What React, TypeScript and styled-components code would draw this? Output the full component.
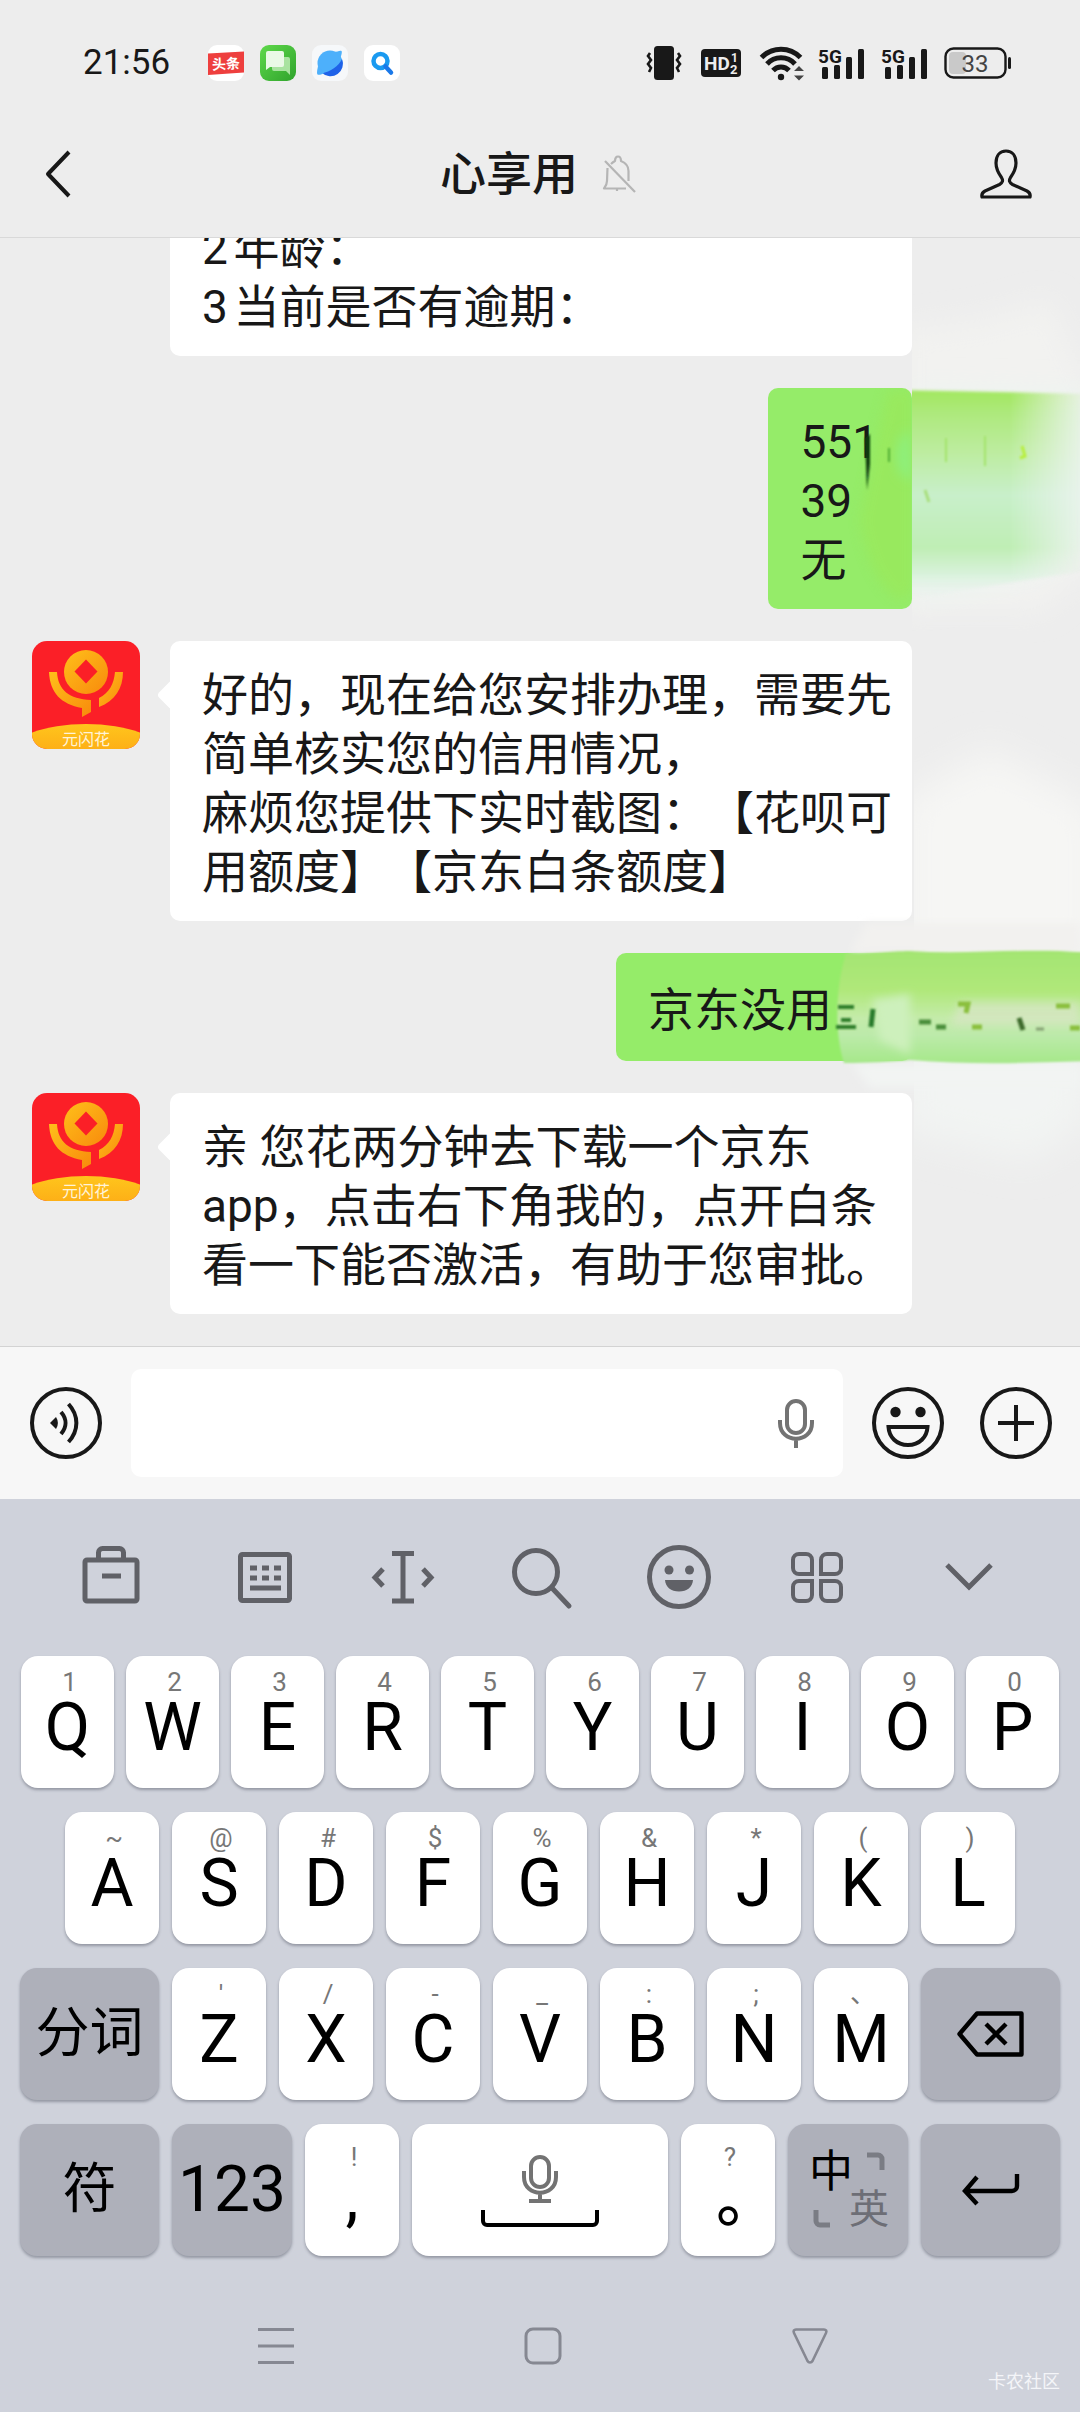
import React from 'react';
import styled, { createGlobalStyle } from 'styled-components';

const sans = `Roboto, "Noto Sans CJK SC", sans-serif`;

const GlobalStyle = createGlobalStyle`
  * { box-sizing: border-box; }
  body { margin: 0; background: #ededed; }
  button, input { font: inherit; color: inherit; border: 0; margin: 0; padding: 0; background: none; }
  svg { display: block; flex: none; overflow: visible; }
`;

const Screen = styled.div`
  display: flex;
  flex-direction: column;
  height: 100vh;
  overflow: hidden;
  position: relative;
  font-family: ${sans};
  color: #181818;
  background: #ededed;
`;

/* ---------- header ---------- */

const StatusBar = styled.div`
  display: flex;
  align-items: center;
  justify-content: space-between;
  height: 126px;
  flex: none;
  padding: 0 69px 0 83px;
`;

const StatusGroup = styled.div<{ $gap: number }>`
  display: flex;
  align-items: center;
  gap: ${(p) => p.$gap}px;
`;

const Clock = styled.time`
  font-size: 35px;
  line-height: 36px;
  margin-right: 22px;
`;

const NavBar = styled.header`
  display: grid;
  grid-template-columns: 1fr auto 1fr;
  align-items: center;
  flex: none;
  height: 112px;
  padding: 0 48px 15px 44px;
  border-bottom: 1px solid #d9d9d9;
`;

const IconButton = styled.button<{ $end?: boolean }>`
  display: flex;
  align-items: center;
  justify-content: center;
  justify-self: ${(p) => (p.$end ? 'end' : 'start')};
`;

const TitleGroup = styled.div`
  display: flex;
  align-items: center;
  gap: 24px;
`;

const Title = styled.h1`
  margin: 0;
  font-size: 46px;
  line-height: 60px;
  font-weight: 500;
`;

/* ---------- chat ---------- */

const Chat = styled.main`
  flex: 1;
  min-height: 0;
  overflow: hidden;
  display: flex;
  flex-direction: column;
  justify-content: flex-end;
  gap: 32px;
  padding-bottom: 32px;
`;

const Row = styled.div<{ $mine?: boolean }>`
  position: relative;
  display: flex;
  flex: none;
  align-items: flex-start;
  justify-content: ${(p) => (p.$mine ? 'flex-end' : 'flex-start')};
  gap: 30px;
  padding: 0 168px 0 32px;
`;

const AvatarSlot = styled.div`
  width: 108px;
  flex: none;
`;

const Bubble = styled.div<{ $mine?: boolean; $wide?: boolean }>`
  position: relative;
  flex: ${(p) => (p.$mine ? 'none' : '1')};
  min-width: ${(p) => (p.$wide ? '296px' : '0')};
  min-height: 108px;
  display: flex;
  align-items: center;
  padding: 25px ${(p) => (p.$mine ? 34 : 18)}px 19px 32px;
  border-radius: 10px;
  background: ${(p) => (p.$mine ? '#95ec69' : '#ffffff')};
`;

const Tail = styled.span`
  position: absolute;
  left: -9px;
  top: 43px;
  width: 22px;
  height: 22px;
  border-radius: 4px;
  background: #ffffff;
  transform: rotate(45deg);
`;

const Message = styled.p`
  margin: 0;
  position: relative;
  font-size: 46px;
  line-height: 59px;
  white-space: pre-line;
  text-spacing-trim: space-all;
  text-autospace: normal;
`;

const Smear = styled.svg<{ $top: number }>`
  position: absolute;
  right: 0;
  top: ${(p) => p.$top}px;
  pointer-events: none;
`;

/* ---------- composer ---------- */

const Composer = styled.form`
  display: flex;
  align-items: center;
  flex: none;
  gap: 29px;
  padding: 22px 28px 22px 30px;
  background: #f7f7f7;
  border-top: 1px solid #d3d3d3;
`;

const Field = styled.div`
  display: flex;
  align-items: center;
  flex: 1;
  min-width: 0;
  height: 108px;
  padding: 0 28px;
  border-radius: 10px;
  background: #ffffff;
`;

const TextInput = styled.input`
  flex: 1;
  min-width: 0;
  height: 60px;
  font-size: 46px;
  outline: none;
`;

const ComposerActions = styled.div`
  display: flex;
  gap: 36px;
`;

/* ---------- keyboard ---------- */

const Keyboard = styled.section`
  flex: none;
  background: #cfd2db;
  color: #000000;
`;

const Tools = styled.div`
  display: grid;
  grid-template-columns: 170fr repeat(5, 138fr) 166fr;
  align-items: center;
  justify-items: center;
  height: 157px;
  padding: 0 28px 2px 26px;
`;

const ToolButton = styled.button`
  display: flex;
  color: #606167;
`;

const Rows = styled.div`
  display: flex;
  flex-direction: column;
  gap: 24px;
`;

const KeyRow = styled.div<{ $pad: number; $gap: number }>`
  display: flex;
  gap: ${(p) => p.$gap}px;
  padding: 0 ${(p) => p.$pad}px;
`;

const Key = styled.button<{ $grow?: number; $dark?: boolean }>`
  display: flex;
  flex-direction: column;
  align-items: center;
  justify-content: ${(p) => (p.$dark ? 'center' : 'flex-start')};
  flex: ${(p) => p.$grow ?? 94} 1 0;
  min-width: 0;
  height: 132px;
  padding-top: ${(p) => (p.$dark ? 0 : 10)}px;
  border-radius: 17px;
  background: ${(p) => (p.$dark ? '#aeb0ba' : '#ffffff')};
  box-shadow: 0 2px 3px rgba(60, 64, 80, 0.4);
`;

const Hint = styled.span`
  font-size: 26px;
  line-height: 32px;
  padding-left: 4px;
  color: #777777;
`;

const Letter = styled.span`
  font-size: 66px;
  line-height: 60px;
`;

const PunctuationKey = styled(Key)`
  padding-top: 17px;
`;

const Comma = styled.span`
  font-size: 66px;
  line-height: 48px;
`;

const FullStop = styled.span`
  font-family: "Noto Sans CJK TC", sans-serif;
  font-weight: 500;
  font-size: 62px;
  line-height: 80px;
`;

const SpaceKey = styled(Key)`
  padding-top: 30px;
`;

const KeyLabel = styled.span<{ $size: number }>`
  font-size: ${(p) => p.$size}px;
  line-height: 64px;
`;

const LanguageGrid = styled.span`
  display: grid;
  grid-template-columns: 36px 40px;
  grid-template-rows: 40px 36px;
  padding-left: 6px;
`;

const LanguageCell = styled.span<{ $corner?: 'top' | 'bottom' }>`
  display: flex;
  align-items: ${(p) => (p.$corner === 'top' ? 'flex-start' : p.$corner === 'bottom' ? 'flex-end' : 'center')};
  justify-content: ${(p) => (p.$corner === 'top' ? 'flex-end' : p.$corner === 'bottom' ? 'flex-start' : 'center')};
  padding-right: ${(p) => (p.$corner === 'top' ? 4 : 0)}px;
`;

const LanguageText = styled.span<{ $muted?: boolean }>`
  font-size: ${(p) => (p.$muted ? 40 : 44)}px;
  line-height: 38px;
  color: ${(p) => (p.$muted ? '#6d6e76' : '#000000')};
`;

const SystemNav = styled.nav`
  display: grid;
  grid-template-columns: repeat(3, 1fr);
  align-items: center;
  justify-items: center;
  height: 156px;
  padding: 24px 136px 0 142px;
`;

const SystemButton = styled.button`
  display: flex;
  color: #868892;
`;

const Watermark = styled.span`
  position: absolute;
  right: 20px;
  bottom: 18px;
  font-size: 18px;
  line-height: 24px;
  color: #f4f5f8;
`;

/* ---------- drawings ---------- */

const ToutiaoIcon = () => (
  <svg width="36" height="36" viewBox="0 0 36 36">
    <rect width="36" height="36" rx="9" fill="#fff" />
    <path d="M0 8.500L36 6.500V27.500L0 30z" fill="#ee3f3e" />
    <text x="18" y="24" textAnchor="middle" fontFamily="Noto Sans CJK SC" fontWeight="700" fontSize="14" fill="#fff" transform="rotate(-3 18 18)">头条</text>
  </svg>
);

const MessagesIcon = () => (
  <svg width="36" height="36" viewBox="0 0 36 36">
    <defs>
      <linearGradient id="msg" x1="0" y1="0" x2="1" y2="1">
        <stop offset="0" stopColor="#5fd94b" /><stop offset="1" stopColor="#2fa32c" />
      </linearGradient>
    </defs>
    <rect width="36" height="36" rx="9" fill="url(#msg)" />
    <path d="M14 12h14a2 2 0 0 1 2 2v16l-4-4H14a2 2 0 0 1-2-2V14a2 2 0 0 1 2-2z" fill="#a9e3a0" />
    <path d="M8 6h14a2 2 0 0 1 2 2v12a2 2 0 0 1-2 2H10l-4 3V8a2 2 0 0 1 2-2z" fill="#eaf9e6" />
  </svg>
);

const BrowserIcon = () => (
  <svg width="36" height="36" viewBox="0 0 36 36">
    <rect width="36" height="36" rx="9" fill="#f6f8fa" />
    <circle cx="18" cy="18" r="12.500" fill="#4db0fb" />
    <path d="M30 14a12.500 12.500 0 0 1-20 14C18 27 27 21 30 14z" fill="#1f62e8" />
    <path d="M22 7c3 0 6-2 7.500-1 1 1-.5 5-1 7zM6 21c-.5 3-1.500 7-.5 8.500 1.500 1 5-.5 7-1.500z" fill="#4db0fb" />
  </svg>
);

const SearchAppIcon = () => (
  <svg width="36" height="36" viewBox="0 0 36 36">
    <rect width="36" height="36" rx="9" fill="#fff" />
    <circle cx="16.500" cy="16" r="7" fill="none" stroke="#1a9af0" strokeWidth="4.500" />
    <path d="M21.500 21.500l5.500 6" stroke="#1a78e8" strokeWidth="4.500" strokeLinecap="round" />
  </svg>
);

const VibrateIcon = () => (
  <svg width="36" height="36" viewBox="0 0 36 36">
    <rect x="8" y="1" width="20" height="34" rx="3.500" fill="#181818" />
    <path d="M4 8l-2 3 3 4-3 4 3 4-2 4M32 8l2 3-3 4 3 4-3 4 2 4" fill="none" stroke="#181818" strokeWidth="2.600" />
  </svg>
);

const HdIcon = () => (
  <svg width="40" height="28" viewBox="0 0 40 28">
    <rect width="40" height="28" rx="4" fill="#181818" />
    <g fill="#ededed" fontFamily="Roboto" fontWeight="700">
      <text x="3" y="21" fontSize="19">HD</text>
      <text x="30" y="13" fontSize="12">1</text>
      <text x="29" y="25" fontSize="13">2</text>
    </g>
  </svg>
);

const WifiIcon = () => (
  <svg width="46" height="36" viewBox="0 0 46 36">
    <g fill="none" stroke="#181818" strokeWidth="5">
      <path d="M1.500 12.500a27 27 0 0 1 39 0" />
      <path d="M7 19a19 19 0 0 1 28 0" />
      <path d="M13 25.500a11 11 0 0 1 16 0" />
    </g>
    <circle cx="21" cy="32" r="3.200" fill="#181818" />
    <path d="M34 26l5-5 5 5zM34 30.500h10l-5 5z" fill="#444" />
  </svg>
);

const SignalIcon = () => (
  <svg width="47" height="36" viewBox="0 0 47 36">
    <text x="0" y="18" fontFamily="Roboto" fontWeight="700" fontSize="19" fill="#181818">5G</text>
    <g fill="#181818">
      <rect x="4" y="22" width="6" height="12" rx="1.500" />
      <rect x="16" y="20" width="6" height="14" rx="1.500" />
      <rect x="28" y="12" width="6" height="22" rx="1.500" />
      <rect x="40" y="4" width="6" height="30" rx="1.500" />
    </g>
  </svg>
);

const BatteryIcon = () => (
  <svg width="67" height="32" viewBox="0 0 67 32">
    <rect x="5" y="5" width="17" height="22" rx="4" fill="#c9c9c9" />
    <rect x="1.500" y="1.500" width="60" height="29" rx="8" fill="none" stroke="#181818" strokeWidth="2.400" />
    <rect x="64" y="10" width="3" height="12" rx="1.500" fill="#181818" />
    <text x="31" y="24.500" textAnchor="middle" fontFamily="Roboto" fontSize="24" fill="#444">33</text>
  </svg>
);

const BackIcon = () => (
  <svg width="28" height="48" viewBox="0 0 28 48">
    <path d="M25 2L4 24l21 22" fill="none" stroke="#181818" strokeWidth="4" strokeLinejoin="round" />
  </svg>
);

const MutedBell = () => (
  <svg width="34" height="38" viewBox="0 0 34 38" fill="none" stroke="#b5b5b5" strokeWidth="2.200" strokeLinejoin="round">
    <path d="M9 9c2-2 3-2.500 4-3 0-6 6-6 6 0 5 2 7.500 5 7.500 10v10M5.500 13L5 26c0 3-1 5-3 7.500h22M15 33.500v2.500" />
    <path d="M3 6l30 31" />
  </svg>
);

const PersonIcon = () => (
  <svg width="52" height="50" viewBox="0 0 52 50">
    <path d="M26 2c-6.500 0-10 5-10 12 0 6.500 3 11 5.500 14.500 1.800 3 1.300 5.200-2 7L5 42c-3 1.700-3.500 4-3 6h48c.5-2 0-4.300-3-6l-14.500-6.500c-3.300-1.800-3.800-4-2-7C33 25 36 20.500 36 14c0-7-3.500-12-10-12z" fill="none" stroke="#181818" strokeWidth="3.200" strokeLinejoin="round" />
  </svg>
);

const Avatar = () => (
  <svg width="108" height="108" viewBox="0 0 108 108" role="img" aria-label="元闪花">
    <defs>
      <clipPath id="avatarClip"><rect width="108" height="108" rx="15" /></clipPath>
      <linearGradient id="gold" x1="0" y1="0" x2="1" y2="1">
        <stop offset="0" stopColor="#ffc01a" /><stop offset="1" stopColor="#f88a0c" />
      </linearGradient>
      <linearGradient id="mound" x1="0" y1="0" x2="0" y2="1">
        <stop offset="0" stopColor="#ffc51c" /><stop offset="1" stopColor="#fb9410" />
      </linearGradient>
    </defs>
    <g clipPath="url(#avatarClip)">
      <rect width="108" height="108" fill="#fb1f27" />
      <circle cx="54" cy="31" r="22" fill="url(#gold)" />
      <path d="M54 18.500l11.500 12-11.500 12-11.500-12z" fill="#fb1f27" />
      <path d="M17 31h8c1 18 12 27 34 28v12l-9 5V67C29 63 18 52 17 31z" fill="url(#gold)" />
      <path d="M83 31h8c0 16-8 29-24 35v-9c10-5 15-14 16-26z" fill="url(#gold)" />
      <ellipse cx="54" cy="112" rx="76" ry="29" fill="url(#mound)" />
      <text x="54" y="104" textAnchor="middle" fontFamily="Noto Sans CJK SC" fontSize="16" fill="#fff3d8">元闪花</text>
    </g>
  </svg>
);

const VoiceIcon = () => (
  <svg width="72" height="72" viewBox="0 0 72 72">
    <circle cx="36" cy="36" r="34" fill="none" stroke="#181818" strokeWidth="4" />
    <path d="M20 36l6-6c2.500 4 2.500 8 0 12z" fill="#181818" />
    <path d="M31 25c6 7 6 15 0 22M38.500 17c10.500 11.500 10.500 26.500 0 38" fill="none" stroke="#181818" strokeWidth="4" />
  </svg>
);

const FieldMic = () => (
  <svg width="38" height="50" viewBox="0 0 38 50" fill="none" stroke="#737373" strokeWidth="4">
    <rect x="10" y="3" width="18" height="32" rx="9" />
    <path d="M3 22v3c0 21 32 21 32 0v-3M19 41v9" />
  </svg>
);

const EmojiIcon = () => (
  <svg width="72" height="72" viewBox="0 0 72 72" fill="none" stroke="#181818" strokeWidth="4">
    <circle cx="36" cy="36" r="34" />
    <circle cx="23.500" cy="25" r="5.200" fill="#181818" stroke="none" />
    <circle cx="48.500" cy="25" r="5.200" fill="#181818" stroke="none" />
    <path d="M16.500 40h39c-.5 10-8 18-19.500 18s-19-8-19.500-18z" />
  </svg>
);

const PlusIcon = () => (
  <svg width="72" height="72" viewBox="0 0 72 72" fill="none" stroke="#181818" strokeWidth="4">
    <circle cx="36" cy="36" r="34" />
    <path d="M36 18v36M18 36h36" />
  </svg>
);

const toolIcons: { label: string; art: React.ReactNode }[] = [
  { label: '工具箱', art: <><rect x="6" y="15" width="52" height="41" rx="2" /><path d="M19.500 15V7.500a4 4 0 0 1 4-4h17a4 4 0 0 1 4 4V15M23 31h19" /></> },
  { label: '键盘', art: <><rect x="7.500" y="9.500" width="49" height="46" rx="2" /><path d="M17 23h7m5 0h7m5 0h7M17 33h7m5 0h7m5 0h7M17 43h31" /></> },
  { label: '光标', art: <path d="M32 9v46M21 8.500h22M21 56h22M12 24L4 32.500l8 8.500M52 24l8 8.500-8 8.500" /> },
  { label: '搜索', art: <><circle cx="27" cy="27" r="21.500" /><path d="M43 43l17 18" strokeLinecap="round" /></> },
  { label: '表情', art: <><circle cx="32" cy="32" r="29.500" /><circle cx="22" cy="25" r="4.500" fill="currentColor" stroke="none" /><circle cx="42.500" cy="25" r="4.500" fill="currentColor" stroke="none" /><path d="M18 35h28c-.5 7-6 11.500-14 11.500S18.500 42 18 35z" fill="currentColor" stroke="none" /></> },
  { label: '更多', art: <g strokeWidth="4"><path d="M14 9h7a6 6 0 0 1 6 6v14H14a6 6 0 0 1-6-6v-8a6 6 0 0 1 6-6zM42 9h8a6 6 0 0 1 6 6v8a6 6 0 0 1-6 6H36V15a6 6 0 0 1 6-6zM14 36h13v14a6 6 0 0 1-6 6h-7a6 6 0 0 1-6-6v-8a6 6 0 0 1 6-6zM36 36h14a6 6 0 0 1 6 6v8a6 6 0 0 1-6 6h-8a6 6 0 0 1-6-6z" /></g> },
  { label: '收起', art: <path d="M10 20l22 22 22-22" /> },
];

const BackspaceIcon = () => (
  <svg width="68" height="46" viewBox="0 0 68 46" fill="none" stroke="#000" strokeWidth="4.400" strokeLinejoin="round">
    <path d="M20 2.500h44.500v41H20L2.500 23z" />
    <path d="M29 13l20 20M49 13L29 33" />
  </svg>
);

const EnterIcon = () => (
  <svg width="58" height="34" viewBox="0 0 58 34" fill="none" stroke="#000" strokeWidth="4.400">
    <path d="M55 1v12a5 5 0 0 1-5 5H4M15 4L3 18l12 13" />
  </svg>
);

const SpaceArt = () => (
  <svg width="120" height="74" viewBox="0 0 120 74" fill="none">
    <g stroke="#737373" strokeWidth="4">
      <rect x="51" y="3" width="18" height="30" rx="9" />
      <path d="M44 17v6c0 21 32 21 32 0v-6M60 39v8M49 47h22" />
    </g>
    <path d="M3 56v11a4 4 0 0 0 4 4h106a4 4 0 0 0 4-4V56" stroke="#000" strokeWidth="4" />
  </svg>
);

const Corner = ({ flip }: { flip?: boolean }) => (
  <svg width="18" height="18" viewBox="0 0 18 18" fill="none" stroke="#7a7c84" strokeWidth="5">
    <path d={flip ? 'M3 0v11a4 4 0 0 0 4 4h10' : 'M0 3h11a4 4 0 0 1 4 4v11'} />
  </svg>
);

const SmearUpper = () => (
  <Smear $top={-128} width="240" height="420" viewBox="840 260 240 420" aria-hidden="true">
    <defs>
      <filter id="b12" x="-50%" y="-50%" width="200%" height="200%"><feGaussianBlur stdDeviation="14" /></filter>
      <filter id="b5" x="-50%" y="-50%" width="200%" height="200%"><feGaussianBlur stdDeviation="6" /></filter>
      <filter id="b2" x="-20%" y="-20%" width="140%" height="140%"><feGaussianBlur stdDeviation="1.500" /></filter>
      <filter id="b1" x="-200%" y="-50%" width="500%" height="200%"><feGaussianBlur stdDeviation="1" /></filter>
      <linearGradient id="fadeDown" x1="0" y1="0" x2="0" y2="1">
        <stop offset="0" stopColor="#a2e75f" />
        <stop offset=".12" stopColor="#aee97e" />
        <stop offset=".3" stopColor="#bdecA0" />
        <stop offset=".5" stopColor="#c8efca" />
        <stop offset=".75" stopColor="#bfeeb4" />
        <stop offset=".88" stopColor="#d9f2dc" />
        <stop offset="1" stopColor="#e9f2ee" stopOpacity="0" />
      </linearGradient>
      <linearGradient id="fadeRight" x1="0" y1="0" x2="1" y2="0">
        <stop offset="0" stopColor="#fff" />
        <stop offset=".65" stopColor="#fff" />
        <stop offset=".9" stopColor="#fff" stopOpacity=".35" />
        <stop offset="1" stopColor="#fff" stopOpacity=".12" />
      </linearGradient>
      <mask id="fadeMask" maskUnits="userSpaceOnUse" x="880" y="380" width="200" height="240">
        <rect x="880" y="380" width="200" height="240" fill="url(#fadeRight)" />
      </mask>
      <clipPath id="insideBubble"><path d="M840 388h63a8 8 0 0 1 8 8v203a8 8 0 0 1-8 8h-63z" /></clipPath>
      <clipPath id="outsideBubble"><path d="M912 260h168v420h-168z" /></clipPath>
    </defs>
    <g clipPath="url(#outsideBubble)">
      <path d="M900 330l80-10 70-20 50 110v150l-60 50-140 0z" fill="#f2f2f0" filter="url(#b12)" />
      <path d="M912 390h12l170 4v150c-50 30-110 46-182 56z" fill="#ecf4f0" filter="url(#b12)" />
      <g mask="url(#fadeMask)">
        <path d="M900 390l190 4v176l-190 30z" fill="url(#fadeDown)" filter="url(#b2)" />
      </g>
      <path d="M914 440v160" stroke="#e4f5e2" strokeWidth="5" filter="url(#b2)" />
    </g>
    <g clipPath="url(#insideBubble)">
      <path d="M888 390c-10 40-20 90-28 130 6 40 20 70 40 80l14-10V390z" fill="#9be858" opacity=".6" filter="url(#b5)" />
      <path d="M910 430c-20 10-16 50 2 50z" fill="#8df07e" filter="url(#b5)" />
    </g>
    <g filter="url(#b1)">
      <path d="M865 438l5-4v30l-3 26-1-26z" fill="#0a3a10" />
      <path d="M889 448v14" stroke="#4fae35" strokeWidth="2" />
      <path d="M946 438v24M985 436v30" stroke="#a4e46c" strokeWidth="2" />
      <path d="M1022 446l3 10-5 2" stroke="#b8ef3c" strokeWidth="3" fill="none" />
      <path d="M925 490l4 12" stroke="#a9df7c" strokeWidth="3" />
    </g>
  </Smear>
);

const SmearLower = () => (
  <Smear $top={-253} width="270" height="520" viewBox="810 700 270 520" aria-hidden="true">
    <defs>
      <filter id="c18" x="-50%" y="-50%" width="200%" height="200%"><feGaussianBlur stdDeviation="18" /></filter>
      <filter id="c1" x="-20%" y="-20%" width="140%" height="140%"><feGaussianBlur stdDeviation="1" /></filter>
      <filter id="c4" x="-50%" y="-50%" width="200%" height="200%"><feGaussianBlur stdDeviation="4" /></filter>
      <linearGradient id="band" x1="0" y1="0" x2="0" y2="1">
        <stop offset="0" stopColor="#a3e572" />
        <stop offset=".35" stopColor="#b0e87a" />
        <stop offset=".6" stopColor="#c4ebaa" />
        <stop offset=".75" stopColor="#bceaaa" />
        <stop offset="1" stopColor="#a6e88a" />
      </linearGradient>
      <clipPath id="rightEdge"><rect x="914" y="700" width="166" height="520" /></clipPath>
    </defs>
    <g clipPath="url(#rightEdge)">
      <path d="M900 800l90-50 110 60v150H900z" fill="#f6f6f4" filter="url(#c18)" />
      <path d="M900 1050h190v70l-60 40-130-30z" fill="#f2f4f3" filter="url(#c18)" />
    </g>
    <path d="M866 923h214v30H850z" fill="#f2f1ef" filter="url(#c4)" />
    <path d="M852 1064h228v24H870z" fill="#f2f4f3" filter="url(#c4)" />
    <path d="M846 954c28 0 43-3 64-3 60 4 120-4 180 2v108c-60 2-120 4-180-1-20 2-40 3-66 3-10-30-8-80 2-109z" fill="url(#band)" filter="url(#c1)" />
    <path d="M872 1000l38-6v60l-30-14z" fill="#cdf0bc" filter="url(#c4)" />
    <path d="M960 1002h120v24H950z" fill="#d6e6c2" opacity=".8" filter="url(#c4)" />
    <path d="M912 952v110" stroke="#d9f5cc" strokeWidth="4" filter="url(#c1)" />
    <path d="M911 992v62" stroke="#f0faec" strokeWidth="6" filter="url(#c1)" />
    <g filter="url(#c1)" fill="none">
      <path d="M838 1007h16M841 1020h10M836 1027h20" stroke="#2f7d2a" strokeWidth="4" />
      <path d="M873 1009l-2 18" stroke="#287a2a" strokeWidth="5" />
      <path d="M919 1022h12M936 1027h10" stroke="#4a8e3a" strokeWidth="5" />
      <path d="M958 1004l10 0-2 9M972 1027h10M1056 1006h14M1070 1028h10" stroke="#8abf3c" strokeWidth="5" />
      <path d="M1019 1018l4 12" stroke="#3c6a2c" strokeWidth="5" />
      <path d="M1036 1029h8" stroke="#84a072" strokeWidth="3" />
    </g>
  </Smear>
);

/* ---------- screen ---------- */

const row1 = [['Q', '1'], ['W', '2'], ['E', '3'], ['R', '4'], ['T', '5'], ['Y', '6'], ['U', '7'], ['I', '8'], ['O', '9'], ['P', '0']];
const row2 = [['A', '~'], ['S', '@'], ['D', '#'], ['F', '$'], ['G', '%'], ['H', '&'], ['J', '*'], ['K', '('], ['L', ')']];
const row3 = [['Z', "'"], ['X', '/'], ['C', '-'], ['V', '_'], ['B', ':'], ['N', ';'], ['M', '、']];

const LetterKeys = ({ keys }: { keys: string[][] }) => (
  <>
    {keys.map(([letter, hint]) => (
      <Key key={letter} type="button">
        <Hint>{hint}</Hint>
        <Letter>{letter}</Letter>
      </Key>
    ))}
  </>
);

const Received = ({ text, avatar = true }: { text: string; avatar?: boolean }) => (
  <Row>
    <AvatarSlot>{avatar && <Avatar />}</AvatarSlot>
    <Bubble>
      {avatar && <Tail />}
      <Message>{text}</Message>
    </Bubble>
  </Row>
);

export default function App() {
  return (
    <Screen>
      <GlobalStyle />
      <StatusBar>
        <StatusGroup $gap={16}>
          <Clock>21:56</Clock>
          <ToutiaoIcon />
          <MessagesIcon />
          <BrowserIcon />
          <SearchAppIcon />
        </StatusGroup>
        <StatusGroup $gap={12}>
          <StatusGroup $gap={19}>
            <VibrateIcon />
            <HdIcon />
            <WifiIcon />
          </StatusGroup>
          <StatusGroup $gap={16}>
            <SignalIcon />
            <SignalIcon />
            <BatteryIcon />
          </StatusGroup>
        </StatusGroup>
      </StatusBar>
      <NavBar>
        <IconButton type="button" aria-label="返回"><BackIcon /></IconButton>
        <TitleGroup>
          <Title>心享用</Title>
          <MutedBell />
        </TitleGroup>
        <IconButton type="button" aria-label="联系人" $end><PersonIcon /></IconButton>
      </NavBar>

      <Chat>
        <Received avatar={false} text={'2年龄：\n3当前是否有逾期：'} />
        <Row $mine>
          <Bubble $mine><Message>{'551\n39\n无'}</Message></Bubble>
          <SmearUpper />
        </Row>
        <Received text={'好的，现在给您安排办理，需要先简单核实您的信用情况，\n麻烦您提供下实时截图：【花呗可用额度】【京东白条额度】'} />
        <Row $mine>
          <Bubble $mine $wide><Message>京东没用</Message></Bubble>
          <SmearLower />
        </Row>
        <Received text="亲 您花两分钟去下载一个京东app，点击右下角我的，点开白条看一下能否激活，有助于您审批。" />
      </Chat>

      <Composer onSubmit={(e) => e.preventDefault()}>
        <IconButton type="button" aria-label="语音"><VoiceIcon /></IconButton>
        <Field>
          <TextInput type="text" aria-label="消息" />
          <IconButton type="button" aria-label="语音输入"><FieldMic /></IconButton>
        </Field>
        <ComposerActions>
          <IconButton type="button" aria-label="表情"><EmojiIcon /></IconButton>
          <IconButton type="button" aria-label="添加"><PlusIcon /></IconButton>
        </ComposerActions>
      </Composer>

      <Keyboard>
        <Tools>
          {toolIcons.map(({ label, art }) => (
            <ToolButton key={label} type="button" aria-label={label}>
              <svg width="64" height="64" viewBox="0 0 64 64" fill="none" stroke="currentColor" strokeWidth="5">{art}</svg>
            </ToolButton>
          ))}
        </Tools>
        <Rows>
          <KeyRow $pad={21} $gap={12}><LetterKeys keys={row1} /></KeyRow>
          <KeyRow $pad={65} $gap={13}><LetterKeys keys={row2} /></KeyRow>
          <KeyRow $pad={20} $gap={13}>
            <Key type="button" $dark $grow={139}><KeyLabel $size={54}>分词</KeyLabel></Key>
            <LetterKeys keys={row3} />
            <Key type="button" $dark $grow={139} aria-label="删除"><BackspaceIcon /></Key>
          </KeyRow>
          <KeyRow $pad={20} $gap={13}>
            <Key type="button" $dark $grow={139}><KeyLabel $size={54}>符</KeyLabel></Key>
            <Key type="button" $dark $grow={120}><KeyLabel $size={64}>123</KeyLabel></Key>
            <PunctuationKey type="button"><Hint>!</Hint><Comma>,</Comma></PunctuationKey>
            <SpaceKey type="button" $grow={256} aria-label="空格"><SpaceArt /></SpaceKey>
            <PunctuationKey type="button"><Hint>?</Hint><FullStop>。</FullStop></PunctuationKey>
            <Key type="button" $dark $grow={120}>
              <LanguageGrid>
                <LanguageCell><LanguageText>中</LanguageText></LanguageCell>
                <LanguageCell $corner="top"><Corner /></LanguageCell>
                <LanguageCell $corner="bottom"><Corner flip /></LanguageCell>
                <LanguageCell><LanguageText $muted>英</LanguageText></LanguageCell>
              </LanguageGrid>
            </Key>
            <Key type="button" $dark $grow={139} aria-label="换行"><EnterIcon /></Key>
          </KeyRow>
        </Rows>
        <SystemNav>
          <SystemButton type="button" aria-label="最近任务">
            <svg width="36" height="38" viewBox="0 0 36 38" stroke="currentColor" strokeWidth="3"><path d="M0 2.500h36M0 19h36M0 35.500h36" /></svg>
          </SystemButton>
          <SystemButton type="button" aria-label="主页">
            <svg width="38" height="38" viewBox="0 0 38 38" fill="none" stroke="currentColor" strokeWidth="3"><rect x="2" y="2" width="34" height="34" rx="7" /></svg>
          </SystemButton>
          <SystemButton type="button" aria-label="返回上一级">
            <svg width="36" height="38" viewBox="0 0 36 38" fill="none" stroke="currentColor" strokeWidth="2.600"><path d="M4 2.500h28c2 0 3 1.500 2 3.500L20.500 34c-1.200 2-3.800 2-5 0L2 6C1 4 2 2.500 4 2.500z" /></svg>
          </SystemButton>
        </SystemNav>
      </Keyboard>
      <Watermark>卡农社区</Watermark>
    </Screen>
  );
}
